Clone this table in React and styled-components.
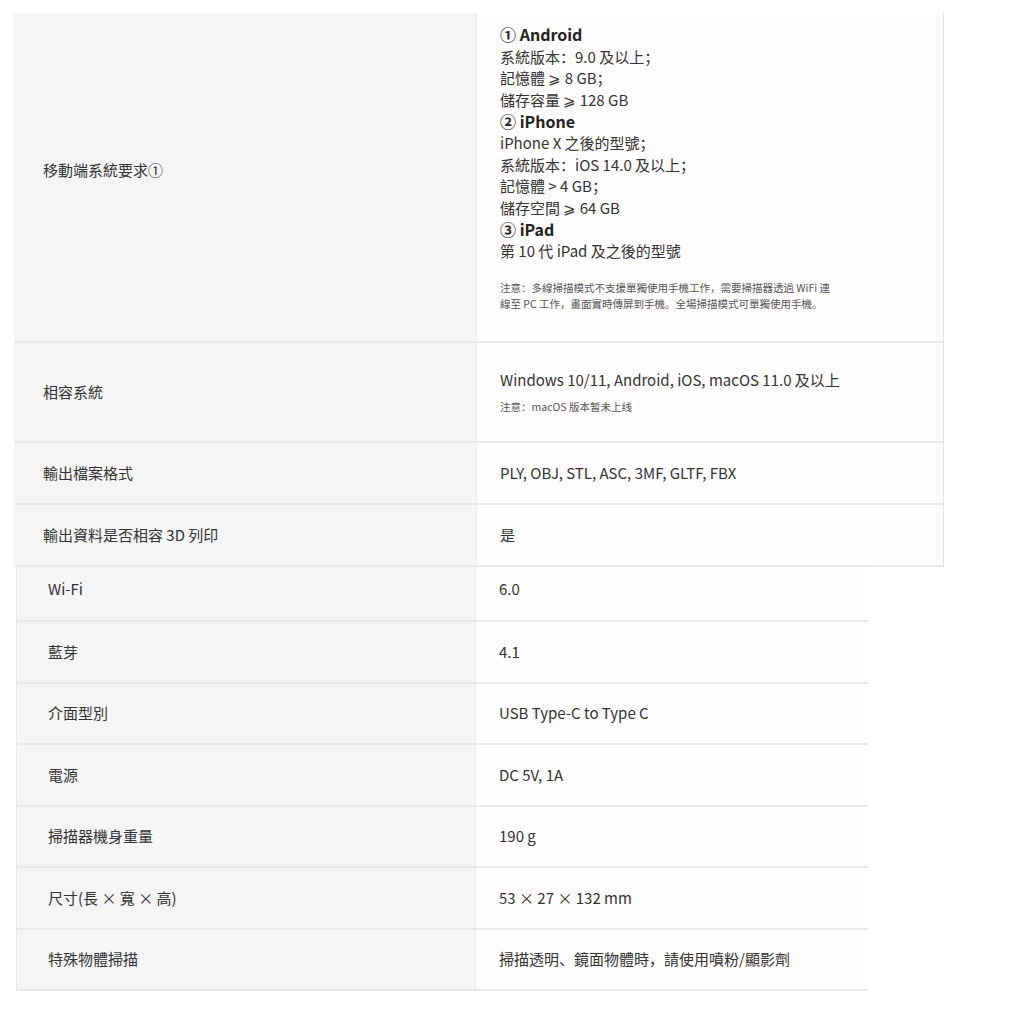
import React from 'react'
import styled, { createGlobalStyle } from 'styled-components'

const GlobalStyle = createGlobalStyle`
    html, body {
        margin: 0;
        padding: 0;
        background: #ffffff;
    }
    body {
        font-family: "Noto Sans CJK SC", "Noto Sans", sans-serif;
        color: #333333;
    }
`

const topRows = [
    { label: '移動端系統要求①', kind: 'mobile', h: '330px' },
    { label: '相容系統', kind: 'compat', h: '100px' },
    { label: '輸出檔案格式', value: 'PLY, OBJ, STL, ASC, 3MF, GLTF, FBX', h: '62px' },
    { label: '輸出資料是否相容 3D 列印', value: '是', h: '62px' },
]

const bottomRows = [
    { label: 'Wi-Fi', value: '6.0' },
    { label: '藍芽', value: '4.1' },
    { label: '介面型別', value: 'USB Type-C to Type C' },
    { label: '電源', value: 'DC 5V, 1A' },
    { label: '掃描器機身重量', value: '190 g' },
    { label: '尺寸(長 × 寬 × 高)', value: '53 × 27 × 132 mm' },
    { label: '特殊物體掃描', value: '掃描透明、鏡面物體時，請使用噴粉/顯影劑' },
]

const mobileLines = [
    { head: true, text: '① Android' },
    { text: '系統版本：9.0 及以上；' },
    { text: '記憶體 ⩾ 8 GB；' },
    { text: '儲存容量 ⩾ 128 GB' },
    { head: true, text: '② iPhone' },
    { text: 'iPhone X 之後的型號；' },
    { text: '系統版本：iOS 14.0 及以上；' },
    { text: '記憶體 > 4 GB；' },
    { text: '儲存空間 ⩾ 64 GB' },
    { head: true, text: '③ iPad' },
    { text: '第 10 代 iPad 及之後的型號' },
]

const App = () => {
    return (
        <>
            <GlobalStyle />
            <Page>
                <TopTable>
                    {topRows.map((row) => (
                        <Row key={row.label} $cols="463px" $h={row.h}>
                            <Label $pad="29px" $lift={row.kind === 'mobile' ? '14px' : '0'}>{row.label}</Label>
                            <Value $top={row.kind === 'mobile' ? '11px' : '0'} $bottom={row.kind === 'mobile' ? '29px' : '0'}>
                                {row.kind === 'mobile' && (
                                    <>
                                        {mobileLines.map((l) => (
                                            <Line key={l.text} $head={l.head}>{l.text}</Line>
                                        ))}
                                        <Note $gap="18px">
                                            注意：多線掃描模式不支援單獨使用手機工作，需要掃描器透過 WiFi 連<br />
                                            線至 PC 工作，畫面實時傳屏到手機。全場掃描模式可單獨使用手機。
                                        </Note>
                                    </>
                                )}
                                {row.kind === 'compat' && (
                                    <>
                                        <Line>Windows 10/11, Android, iOS, macOS 11.0 及以上</Line>
                                        <Note $gap="9px">注意：macOS 版本暂未上线</Note>
                                    </>
                                )}
                                {!row.kind && <Line>{row.value}</Line>}
                            </Value>
                        </Row>
                    ))}
                </TopTable>
                <BottomTable>
                    {bottomRows.map((row, i) => (
                        <Row key={row.label} $cols="460px" $h={i === 0 ? '55px' : '61.5px'}>
                            <Label $pad="31px" $edge $lift={i === 0 ? '9px' : '0'}>{row.label}</Label>
                            <Value $bottom={i === 0 ? '9px' : '0'}>
                                <Line>{row.value}</Line>
                            </Value>
                        </Row>
                    ))}
                </BottomTable>
            </Page>
        </>
    )
}

export default App

const Page = styled.div`
    padding-top: 13px;
    padding-bottom: 34px;
`

const TopTable = styled.div`
    margin-left: 14px;
    width: 929px;
    border-right: 1px solid #e4e4e4;
`

const BottomTable = styled.div`
    margin-left: 16px;
    width: 852px;
`

const Row = styled.div`
    display: grid;
    grid-template-columns: ${props => props.$cols} 1fr;
    height: ${props => props.$h};
    border-bottom: 2px solid #e9e9e9;
    box-sizing: border-box;
`

const Label = styled.div`
    display: flex;
    align-items: center;
    background: #f5f5f5;
    border-right: 1px solid #ececec;
    border-left: ${props => props.$edge ? '1px solid #e6e6e6' : 'none'};
    padding-left: ${props => props.$pad};
    padding-bottom: ${props => props.$lift};
    font-size: 15px;
    line-height: 20px;
    color: #333333;
`

const Value = styled.div`
    display: flex;
    flex-direction: column;
    justify-content: center;
    background: #fefcfc;
    padding-left: 23px;
    padding-top: ${props => props.$top || '0'};
    padding-bottom: ${props => props.$bottom || '0'};
`

const Line = styled.div`
    font-size: ${props => props.$head ? '16px' : '15px'};
    font-weight: ${props => props.$head ? 700 : 400};
    line-height: 21.6px;
    color: ${props => props.$head ? '#222222' : '#333333'};
`

const Note = styled.div`
    margin-top: ${props => props.$gap};
    font-size: 10.5px;
    line-height: 16px;
    color: #555555;
`
